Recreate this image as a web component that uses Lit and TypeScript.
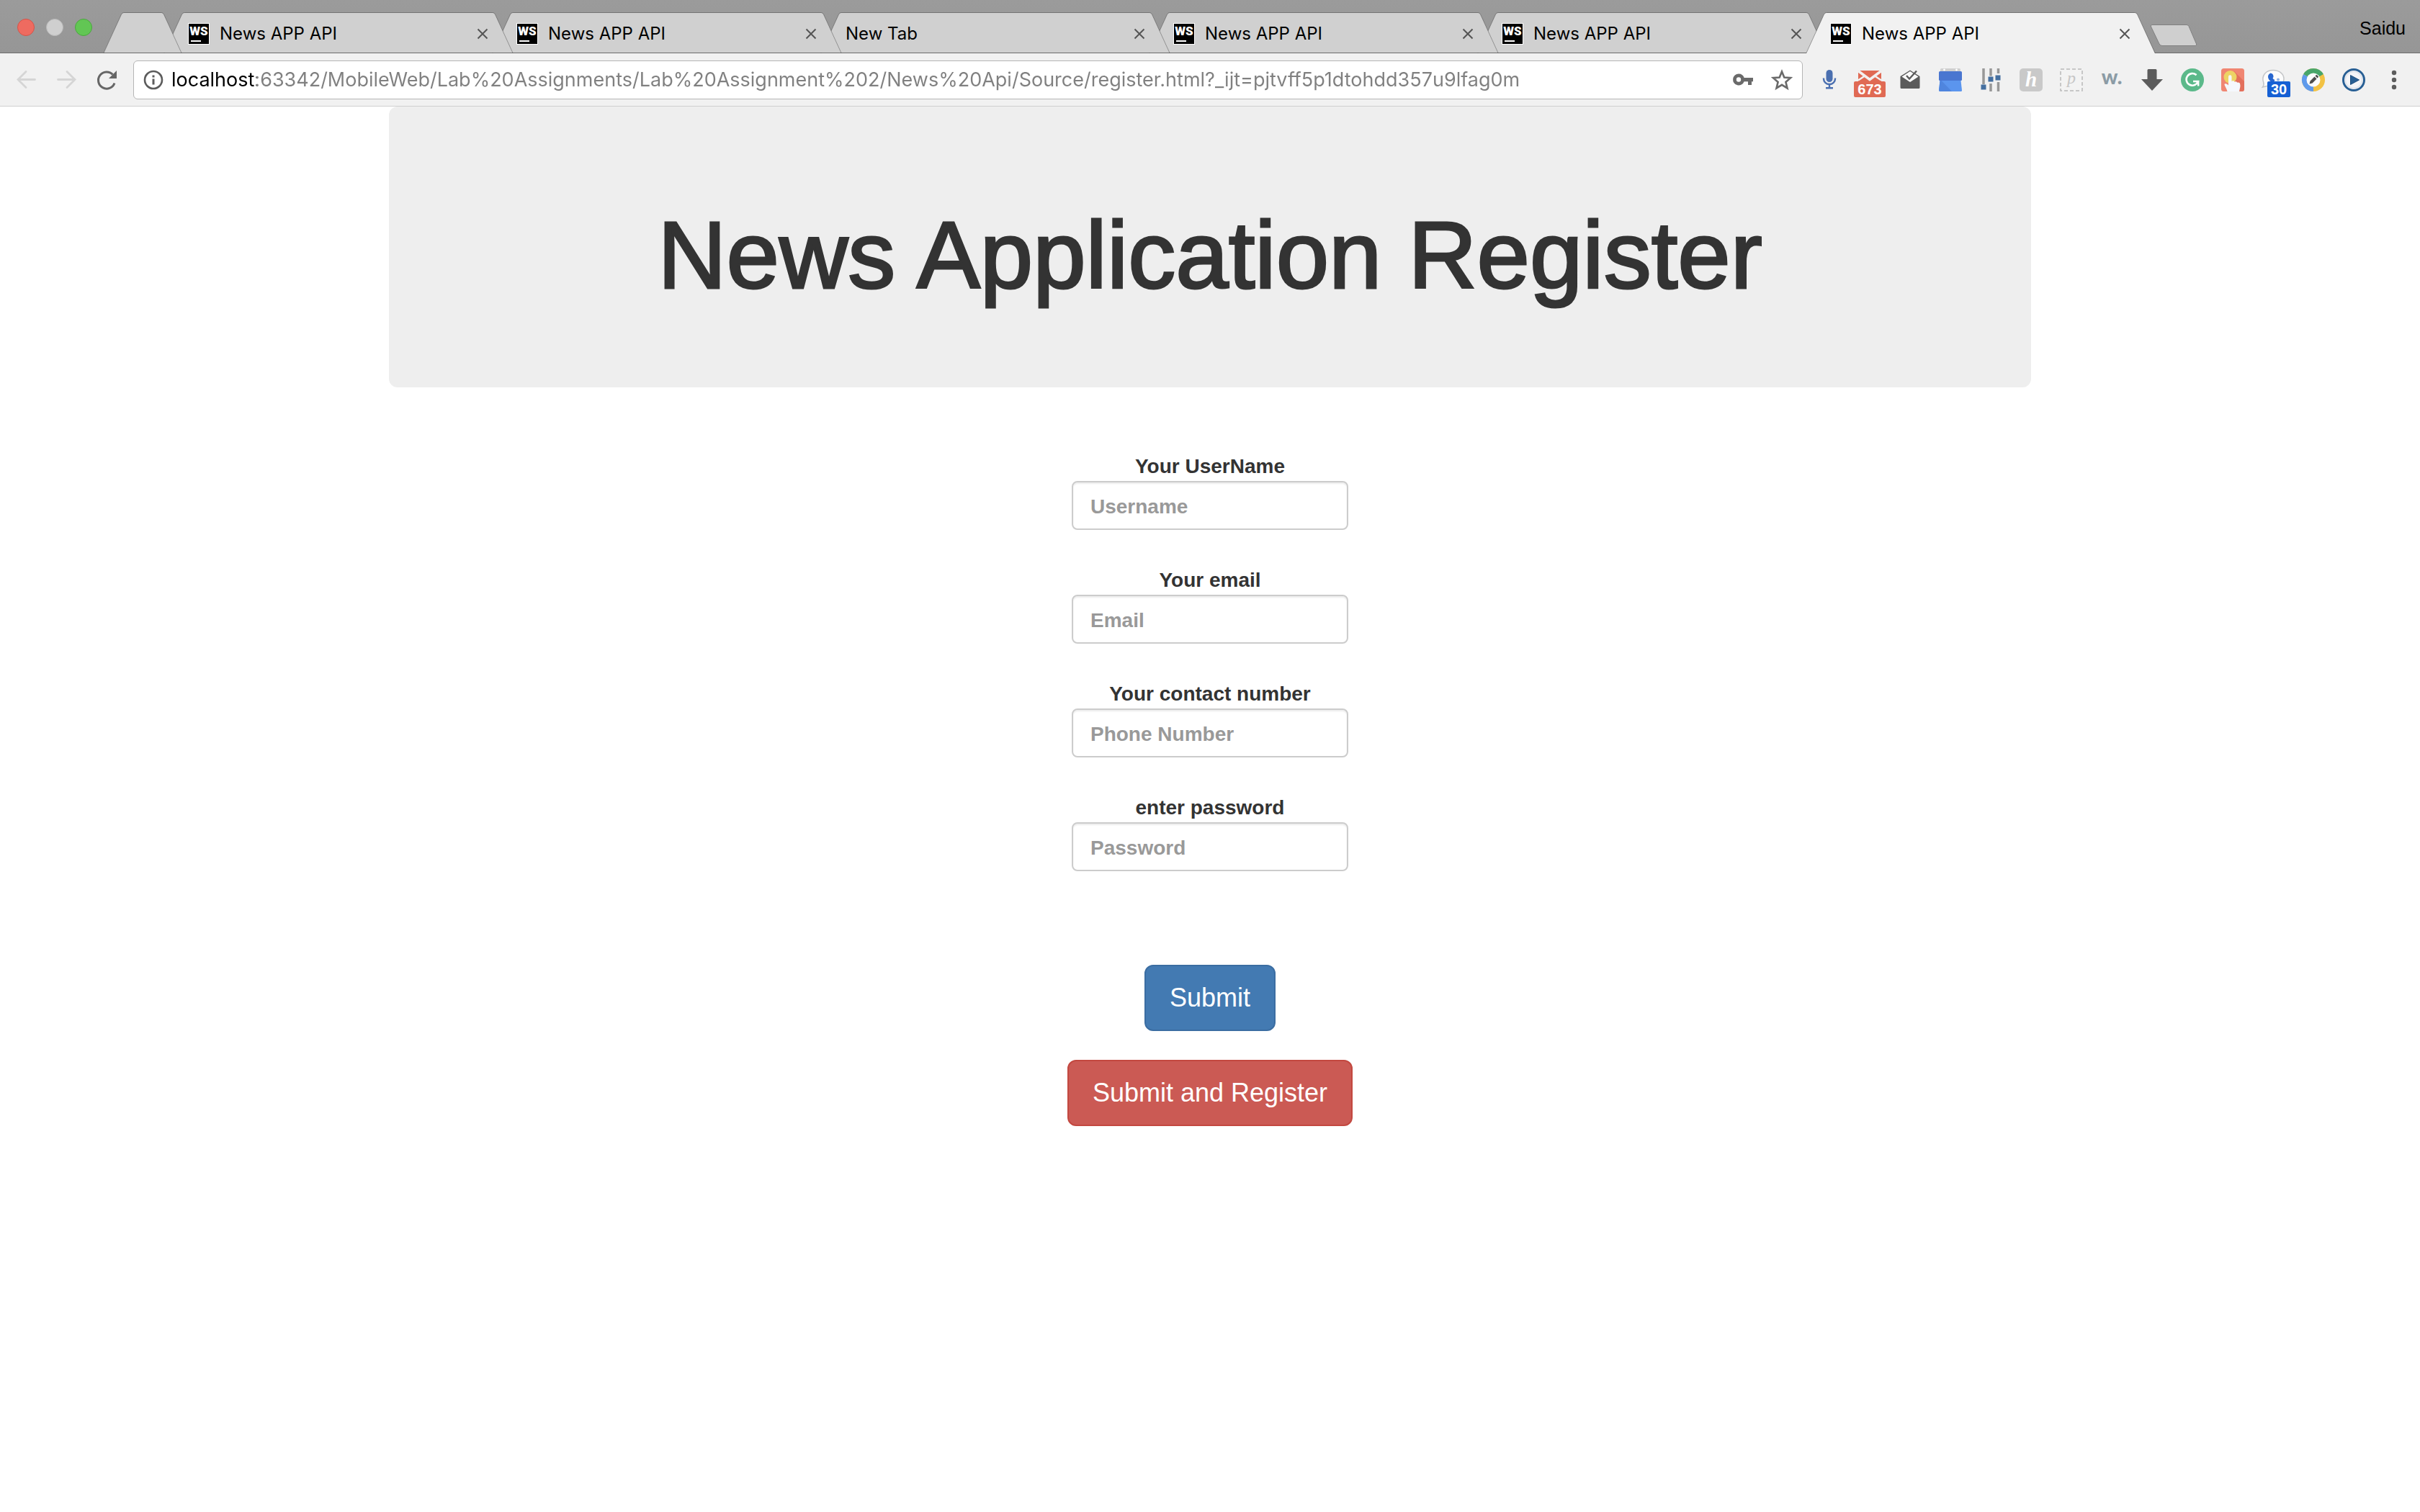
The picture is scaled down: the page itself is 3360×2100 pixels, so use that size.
import { LitElement, html, css, svg, nothing, TemplateResult } from "lit";
import { customElement, state } from "lit/decorators.js";
import { classMap } from "lit/directives/class-map.js";

interface Tab {
  title: string;
  favicon: boolean;
}

interface Field {
  id: string;
  label: string;
  type: string;
  placeholder: string;
}

interface Extension {
  name: string;
  art: TemplateResult;
  badge?: string;
  tone?: string;
}

const TABS: Tab[] = [
  { title: "News APP API", favicon: true },
  { title: "News APP API", favicon: true },
  { title: "New Tab", favicon: false },
  { title: "News APP API", favicon: true },
  { title: "News APP API", favicon: true },
  { title: "News APP API", favicon: true },
];

const FIELDS: Field[] = [
  { id: "username", label: "Your UserName", type: "text", placeholder: "Username" },
  { id: "email", label: "Your email", type: "email", placeholder: "Email" },
  { id: "phone", label: "Your contact number", type: "tel", placeholder: "Phone Number" },
  { id: "password", label: "enter password", type: "password", placeholder: "Password" },
];

const ADDRESS =
  "localhost:63342/MobileWeb/Lab%20Assignments/Lab%20Assignment%202/News%20Api/Source/register.html?_ijt=pjtvff5p1dtohdd357u9lfag0m";

const EXTENSIONS: Extension[] = [
  {
    name: "Voice search",
    art: svg`
      <rect x="11.5" y="2" width="9" height="17" rx="4.5" fill="#4a6fb0"/>
      <path d="M8 13.500v1a8 7.500 0 0 0 16 0v-1" fill="none" stroke="#4a6fb0" stroke-width="2.400"/>
      <path d="M16 22v5M11 27.200h10" stroke="#4a6fb0" stroke-width="2.400" fill="none"/>`,
  },
  {
    name: "Mail checker",
    badge: "673",
    tone: "red",
    art: svg`
      <rect x="0" y="3" width="32" height="24" fill="#e06a54"/>
      <path d="M0 3.500L16 15.500L32 3.500" fill="none" stroke="#f3f1f0" stroke-width="3.500"/>
      <path d="M0 16.500L9 10.500M32 16.500L23 10.500" stroke="#f3f1f0" stroke-width="2.500"/>`,
  },
  {
    name: "Inbox",
    art: svg`
      <path d="M2.500 11L16 2.500L29.500 11V26.500a1.500 1.500 0 0 1-1.500 1.500H4a1.500 1.500 0 0 1-1.500-1.500z" fill="#5b5b5b"/>
      <path d="M4.500 11.500L16 4L27.500 11.500L16 19z" fill="#fafafa"/>
      <path d="M11 10L15 14.500L25 3.500" fill="none" stroke="#5b5b5b" stroke-width="2.400"/>`,
  },
  {
    name: "Calendar",
    art: svg`
      <path d="M2 4V1.500a1.500 1.500 0 0 1 1.500-1.500h25a1.500 1.500 0 0 1 1.500 1.500V4z" fill="#cfcfcf"/>
      <circle cx="7.500" cy="2" r="1.400" fill="#fff"/><circle cx="24.500" cy="2" r="1.400" fill="#fff"/>
      <rect x="0" y="4" width="32" height="13" rx="1.500" fill="#4a76d0"/>
      <path d="M1.500 17h29L32 30.500a1.500 1.500 0 0 1-1.500 1.500h-29a1.500 1.500 0 0 1-1.500-1.500z" fill="#5b95ee"/>
      <path d="M1.500 17h2L18 32H1.500L0 30.500z" fill="#4f85de"/>`,
  },
  {
    name: "Settings mixer",
    art: svg`
      <path d="M6 0v22M16 0v10.500M16 21v11M26.500 0v7M26.500 19v13" stroke="#989898" stroke-width="3.500"/>
      <path d="M2.500 22.500h7v7h-7zM12.500 11.500h7v7h-7zM22.500 9.500h7v7h-7z" fill="#446fa0"/>`,
  },
  {
    name: "Coupons",
    art: svg`
      <rect width="32" height="32" rx="5" fill="#c9c9c9"/>
      <text x="16" y="25" text-anchor="middle" class="script-bold">h</text>`,
  },
  {
    name: "Pin",
    art: svg`
      <rect x="1" y="1" width="30" height="30" fill="#f3f3f3" stroke="#b9b9b9" stroke-width="1.500" stroke-dasharray="5 3"/>
      <text x="16" y="21" text-anchor="middle" class="script-light">p</text>`,
  },
  {
    name: "Word tracker",
    art: svg`<text x="16" y="22" text-anchor="middle" class="wordmark">w.</text>`,
  },
  {
    name: "Downloads",
    art: svg`<path d="M11 1h10a1.500 1.500 0 0 1 1.500 1.500V15H31L16 31L1 15h8.500V2.500a1.500 1.500 0 0 1 1.500-1.500z" fill="#5c5c5c"/>`,
  },
  {
    name: "Grammar",
    art: svg`
      <circle cx="16" cy="16" r="16" fill="#5bb98a"/>
      <path d="M21.500 9.200a8.300 8.300 0 1 0 2.300 8.800H17" fill="none" stroke="#fff" stroke-width="2.600"/>
      <path d="M24.200 17v7.500" stroke="#fff" stroke-width="2.400"/>`,
  },
  {
    name: "Click helper",
    art: svg`
      <rect width="32" height="32" rx="3.500" fill="#f08672"/>
      <path d="M18 4L32 18V28.500a3.500 3.500 0 0 1-3.500 3.500H22L12 20z" fill="#e3705c"/>
      <circle cx="12.500" cy="12" r="9" fill="#edd365"/>
      <path d="M10 11.500a2 2 0 0 1 4.500 0V18c1-1 3.500-1 4 .8c1.200-1 3.300-.6 3.700 1c1.500-.8 4-.2 4 2.200c1 3-.7 6-1.200 10H8.500C7.500 28 5.500 25.500 4.500 22.500c0-1.700 3-1.700 5.500 1z" fill="#f5f8fc"/>`,
  },
  {
    name: "Voice calls",
    badge: "30",
    tone: "blue",
    art: svg`
      <path d="M16 2.500c8.500 0 15 5 15 12s-6.500 11-14 11c-3 0-5.500-.5-7.500-1.500L1.500 26c2-2.500 2-4 1.200-6.500C-.5 10 6 2.500 16 2.500z" fill="#fcfcfc" stroke="#c4c6c8" stroke-width="1.500"/>
      <path d="M12.500 6.500c-6 2.500-4 11 4 13.500l2-4c-1.500-.5-2.500-1.500-3-2.500c2-1.500 1-6.500-3-7z" fill="#2766cf"/>
      <circle cx="23" cy="15.500" r="2" fill="#8fb0e4"/>`,
  },
  {
    name: "Page editor",
    art: svg`
      <circle cx="16" cy="16" r="16" fill="#f2c244"/>
      <path d="M16 16L2.140 8A16 16 0 0 1 29.860 8z" fill="#48a56a"/>
      <path d="M16 16V32A16 16 0 0 1 2.140 8z" fill="#5f9aec"/>
      <circle cx="16" cy="16" r="9.500" fill="#fcfcfc"/>
      <path d="M10.500 21.500l1-4l6-6l3 3l-6 6zM18.500 10.500l1.200-1.200a1 1 0 0 1 1.400 0l1.600 1.600a1 1 0 0 1 0 1.400l-1.200 1.200z" fill="#4d4d4d"/>`,
  },
  {
    name: "Player",
    art: svg`
      <circle cx="16" cy="16" r="14.500" fill="#f4f5f8" stroke="#285f94" stroke-width="3"/>
      <circle cx="16" cy="16" r="11.500" fill="none" stroke="#dfe3ea" stroke-width="1.500"/>
      <path d="M11.500 9.500L23.500 16L11.500 22.500z" fill="#285f94" stroke="#1f4f80" stroke-width="1"/>`,
  },
];

@customElement("app-root")
export class AppRoot extends LitElement {
  static styles = css`
    :host {
      display: block;
      min-height: 100vh;
      background: #fff;
      color: #333;
      font-family: "Liberation Sans", Arial, sans-serif;
      font-size: 28px;
      line-height: 40px;
    }
    * {
      box-sizing: border-box;
    }
    button {
      font: inherit;
      color: inherit;
      border: 0;
      padding: 0;
      background: none;
      cursor: pointer;
    }
    svg {
      display: block;
      flex: none;
      overflow: visible;
    }

    /* Tab strip */
    .strip {
      display: flex;
      align-items: flex-end;
      height: 74px;
      padding: 0 20px 0 24px;
      background: linear-gradient(#9b9b9b, #969696);
      box-shadow: inset 0 -1px #6c6c6c;
    }
    .lights {
      display: flex;
      gap: 16px;
      align-self: center;
      padding-top: 2px;
      margin-right: 16px;
    }
    .light {
      width: 24px;
      height: 24px;
      border-radius: 50%;
      border: 1px solid #b9b9b9;
      background: #cfcfcf;
    }
    .close-light {
      background: #ee6b60;
      border-color: #d3544a;
    }
    .zoom-light {
      background: #62c654;
      border-color: #4ba63f;
    }
    .tabs {
      display: flex;
      flex: 0 1 2848px;
      min-width: 0;
      isolation: isolate;
    }
    .tab {
      position: relative;
      display: flex;
      flex: 1 1 0;
      min-width: 0;
      height: 57px;
      margin-right: -28px;
      --fill: #d0d0d0;
    }
    .tab:nth-child(1) { z-index: 6; }
    .tab:nth-child(2) { z-index: 5; }
    .tab:nth-child(3) { z-index: 4; }
    .tab:nth-child(4) { z-index: 3; }
    .tab:nth-child(5) { z-index: 2; }
    .tab:nth-child(6) { z-index: 1; }
    .tab:last-child { margin-right: 0; }
    .pinned {
      flex: 0 0 108px;
      margin-right: -24px;
    }
    .tab.active {
      z-index: 7;
      --fill: #f1f1f1;
    }
    .slope {
      fill: var(--fill);
    }
    .edge {
      fill: none;
      stroke: rgba(0, 0, 0, 0.3);
    }
    .face {
      display: flex;
      align-items: center;
      flex: 1;
      min-width: 0;
      height: 56px;
      padding: 2px 5px 0 6px;
      gap: 15px;
      background: var(--fill);
      border-top: 1px solid #757575;
    }
    .active .face {
      height: 57px;
      padding-bottom: 1px;
    }
    .tab-title {
      flex: 1;
      min-width: 0;
      overflow: hidden;
      white-space: nowrap;
      color: #000;
      font: 24px/32px Inter, sans-serif;
      text-align: left;
    }
    .favicon {
      box-shadow: 0 0 0 1px #fff;
      background: #000;
    }
    .favicon-text {
      fill: #fff;
      font: 900 17px Roboto, sans-serif;
    }
    .tab-close {
      flex: none;
    }
    .cross {
      fill: none;
      stroke: #555;
      stroke-width: 2px;
    }
    .new-tab {
      margin: 0 0 9px -8px;
      z-index: 8;
    }
    .profile {
      align-self: center;
      margin-left: auto;
      padding-top: 4px;
      color: #000;
      font-size: 25px;
      line-height: 32px;
    }

    /* Toolbar */
    .toolbar {
      display: flex;
      align-items: center;
      height: 74px;
      padding: 0 20px 0 20px;
      background: #f1f1f1;
      border-bottom: 1px solid #d0d0d0;
    }
    .nav {
      display: flex;
      gap: 24px;
      margin-right: 21px;
    }
    .omnibox {
      display: flex;
      align-items: center;
      flex: 1;
      min-width: 0;
      height: 54px;
      padding: 0 13px 0 13px;
      background: #fff;
      border: 1px solid #b5b5b5;
      border-radius: 6px;
    }
    .address {
      flex: 1;
      min-width: 0;
      height: 40px;
      margin-left: 11px;
      padding: 0;
      border: 0;
      outline: 0;
      font: 27px/40px Inter, sans-serif;
      color: transparent;
      background: linear-gradient(90deg, #000 118px, #808080 118px);
      -webkit-background-clip: text;
      background-clip: text;
    }
    .omni-actions {
      display: flex;
      gap: 24px;
    }
    .extensions {
      display: flex;
      gap: 24px;
      margin-left: 21px;
    }
    .extension {
      position: relative;
      width: 32px;
      height: 32px;
    }
    .badge {
      position: absolute;
      top: 18px;
      height: 22px;
      border-radius: 2px;
      color: #fff;
      font-size: 20px;
      font-weight: 700;
      line-height: 23px;
      text-align: center;
    }
    .red {
      left: -6px;
      width: 44px;
      background: #e06a54;
    }
    .blue {
      left: 8px;
      width: 32px;
      background: #1560d4;
    }
    .script-bold {
      fill: #fff;
      font: italic 700 29px "Liberation Serif", serif;
    }
    .script-light {
      fill: #c6c6c6;
      font: italic 24px "Liberation Serif", serif;
    }
    .wordmark {
      fill: #8b9ba5;
      font: 900 28px Lato, sans-serif;
    }

    /* Page */
    .page {
      display: flex;
      flex-direction: column;
      align-items: center;
      max-width: 2340px;
      margin: 0 auto;
      padding: 0 30px;
    }
    .jumbotron {
      align-self: stretch;
      padding: 138px 60px 114px;
      border-radius: 12px;
      background: #eee;
      text-align: center;
    }
    .heading {
      margin: 0;
      font-size: 132px;
      font-weight: 500;
      line-height: 138px;
      -webkit-text-stroke: 3px #333;
    }
    .form {
      display: flex;
      flex-direction: column;
      align-items: center;
      margin-top: 90px;
    }
    .fields {
      display: grid;
      gap: 50px;
    }
    .field {
      display: flex;
      flex-direction: column;
      align-items: center;
    }
    .label {
      font-weight: 700;
    }
    .control {
      width: 384px;
      height: 68px;
      padding: 4px 24px 0;
      border: 2px solid #ccc;
      border-radius: 8px;
      background: #fff;
      box-shadow: inset 0 2px 2px rgba(0, 0, 0, 0.075);
      color: #555;
      font: inherit;
      font-weight: 700;
    }
    .control::placeholder {
      color: #999;
      opacity: 1;
    }
    .actions {
      display: flex;
      flex-direction: column;
      align-items: center;
      gap: 40px;
      margin-top: 130px;
    }
    .btn {
      padding: 20px 33px;
      border: 2px solid;
      border-radius: 12px;
      color: #fff;
      font-size: 36px;
      line-height: 48px;
    }
    .primary {
      background: #437ab2;
      border-color: #3b6da2;
    }
    .danger {
      background: #cb5a54;
      border-color: #c34840;
    }
  `;

  @state() private activeTab = TABS.length - 1;

  private renderSlope(active: boolean, right: boolean) {
    const bottom = active ? 57 : 56;
    return html`<svg width="28" height="57" viewBox="0 0 28 57" aria-hidden="true">
      <g transform=${right ? "translate(28 0) scale(-1 1)" : "translate(0 0)"}>
        <path class="slope" d="M0 ${bottom}L24.500 3Q26 .5 28 .5V${bottom}z" />
        <path class="edge" d="M0 56.500L24.500 3Q25.800 .5 28 .5" />
      </g>
    </svg>`;
  }

  private renderTab(tab: Tab, index: number) {
    const active = index === this.activeTab;
    return html`<div
      class=${classMap({ tab: true, active })}
      role="tab"
      aria-selected=${active}
      @click=${() => (this.activeTab = index)}
    >
      ${this.renderSlope(active, false)}
      <div class="face">
        ${tab.favicon
          ? html`<svg class="favicon" width="28" height="28" viewBox="0 0 28 28" aria-hidden="true">
              <text class="favicon-text" x="14" y="16" text-anchor="middle">WS</text>
              <rect x="3" y="23" width="14" height="2" fill="#fff" />
            </svg>`
          : nothing}
        <span class="tab-title">${tab.title}</span>
        <button class="tab-close" aria-label="Close tab">
          <svg width="18" height="18" viewBox="0 0 18 18"><path class="cross" d="M2.500 2.500l13 13M15.500 2.500l-13 13" /></svg>
        </button>
      </div>
      ${this.renderSlope(active, true)}
    </div>`;
  }

  private renderStrip() {
    return html`<header class="strip">
      <div class="lights">
        <button class="light close-light" aria-label="Close window"></button>
        <button class="light" aria-label="Minimize window"></button>
        <button class="light zoom-light" aria-label="Zoom window"></button>
      </div>
      <div class="tabs" role="tablist">
        <div class="tab pinned" role="tab" aria-selected="false" aria-label="Pinned tab">
          ${this.renderSlope(false, false)}
          <div class="face"></div>
          ${this.renderSlope(false, true)}
        </div>
        ${TABS.map((tab, index) => this.renderTab(tab, index))}
      </div>
      <button class="new-tab" aria-label="Open new tab">
        <svg width="68" height="32" viewBox="0 0 68 32">
          <path d="M4 1.500H52Q54 1.500 55 3.500L65.500 28Q66.500 30.500 64 30.500H18Q15.500 30.500 14 28L2.500 4Q1.500 1.500 4 1.500z" fill="#cfcfcf" stroke="#808080" />
        </svg>
      </button>
      <span class="profile">Saidu</span>
    </header>`;
  }

  private renderToolbar() {
    return html`<nav class="toolbar">
      <div class="nav">
        <button aria-label="Back">
          <svg width="32" height="32" viewBox="0 0 32 32"><path d="M28.500 15.500H5M16 4.500L5 15.500L16 26.500" fill="none" stroke="#d5d5d5" stroke-width="2.800" stroke-linecap="round" /></svg>
        </button>
        <button aria-label="Forward">
          <svg width="32" height="32" viewBox="0 0 32 32"><path d="M4.500 15.500H28M17 4.500L28 15.500L17 26.500" fill="none" stroke="#d5d5d5" stroke-width="2.800" stroke-linecap="round" /></svg>
        </button>
        <button aria-label="Reload">
          <svg width="32" height="32" viewBox="0 0 32 32">
            <path d="M24.500 8.500A11.600 11.600 0 1 0 27 20.500" fill="none" stroke="#666" stroke-width="3" />
            <path d="M30 3V14H19z" fill="#666" />
          </svg>
        </button>
      </div>
      <div class="omnibox">
        <svg width="28" height="28" viewBox="0 0 28 28" aria-hidden="true">
          <circle cx="14" cy="14" r="12" fill="none" stroke="#5c5c5c" stroke-width="2.600" />
          <path d="M12.500 7.500h3v3h-3zM12.500 12.500h3v8h-3z" fill="#5c5c5c" />
        </svg>
        <input class="address" type="text" aria-label="Address" spellcheck="false" .value=${ADDRESS} />
        <div class="omni-actions">
          <button aria-label="Saved password">
            <svg width="30" height="30" viewBox="0 0 30 30">
              <path d="M9 6.500a8 8 0 1 0 7.600 10.700H22V22h5v-4.800h2V12H16.600A8 8 0 0 0 9 6.500zM9 11.300a3.200 3.200 0 1 1 0 6.400a3.200 3.200 0 0 1 0-6.400z" fill="#6a6a6a" fill-rule="evenodd" />
            </svg>
          </button>
          <button aria-label="Bookmark this page">
            <svg width="30" height="30" viewBox="0 0 30 30">
              <path d="M15 3.500L18.300 11.600L27 12.200L20.400 17.900L22.500 26.400L15 21.800L7.500 26.400L9.600 17.900L3 12.200L11.700 11.600z" fill="none" stroke="#6a6a6a" stroke-width="2.600" />
            </svg>
          </button>
        </div>
      </div>
      <div class="extensions">
        ${EXTENSIONS.map(
          (item) => html`<button class="extension" aria-label=${item.name}>
            <svg width="32" height="32" viewBox="0 0 32 32">${item.art}</svg>
            ${item.badge ? html`<span class="badge ${item.tone}">${item.badge}</span>` : nothing}
          </button>`
        )}
        <button class="extension" aria-label="Menu">
          <svg width="32" height="32" viewBox="0 0 32 32" fill="#5c5c5c">
            <circle cx="16" cy="6" r="3.200" /><circle cx="16" cy="16" r="3.200" /><circle cx="16" cy="26" r="3.200" />
          </svg>
        </button>
      </div>
    </nav>`;
  }

  render() {
    return html`
      ${this.renderStrip()} ${this.renderToolbar()}
      <main class="page">
        <div class="jumbotron"><h1 class="heading">News Application Register</h1></div>
        <form class="form" @submit=${(event: Event) => event.preventDefault()}>
          <div class="fields">
            ${FIELDS.map(
              (field) => html`<div class="field">
                <label class="label" for=${field.id}>${field.label}</label>
                <input class="control" id=${field.id} name=${field.id} type=${field.type} placeholder=${field.placeholder} />
              </div>`
            )}
          </div>
          <div class="actions">
            <button class="btn primary" type="submit">Submit</button>
            <button class="btn danger" type="submit">Submit and Register</button>
          </div>
        </form>
      </main>
    `;
  }
}
